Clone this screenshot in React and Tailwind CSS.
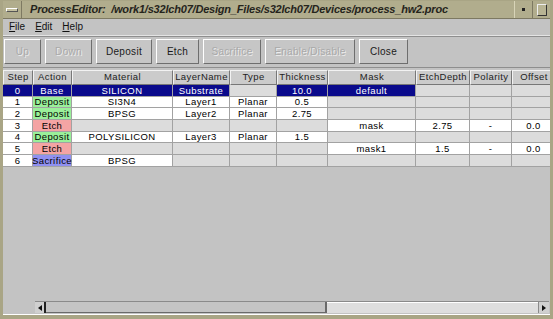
const font = { fontFamily: '"Liberation Sans", Arial, sans-serif' };

const cols = [
  { key: 'step', label: 'Step', w: 30 },
  { key: 'action', label: 'Action', w: 39 },
  { key: 'material', label: 'Material', w: 101 },
  { key: 'layer', label: 'LayerName', w: 57 },
  { key: 'type', label: 'Type', w: 47 },
  { key: 'thick', label: 'Thickness', w: 51 },
  { key: 'mask', label: 'Mask', w: 88 },
  { key: 'depth', label: 'EtchDepth', w: 54 },
  { key: 'pol', label: 'Polarity', w: 42 },
  { key: 'off', label: 'Offset', w: 44 },
];

// each cell: [text, background]
const W = 'bg-white';
const G = 'bg-[#dcdcdc]';
const N = 'bg-[#0a0a8c] text-white';
const GREEN = 'bg-[#9af09a]';
const PINK = 'bg-[#f4a4a4]';
const BLUE = 'bg-[#9090f0]';

const rows = [
  [['0', N], ['Base', N], ['SILICON', N], ['Substrate', N], ['', G], ['10.0', N], ['default', N], ['', G], ['', G], ['', G]],
  [['1', W], ['Deposit', GREEN], ['SI3N4', W], ['Layer1', W], ['Planar', W], ['0.5', W], ['', G], ['', G], ['', G], ['', G]],
  [['2', W], ['Deposit', GREEN], ['BPSG', W], ['Layer2', W], ['Planar', W], ['2.75', W], ['', G], ['', G], ['', G], ['', G]],
  [['3', W], ['Etch', PINK], ['', G], ['', G], ['', G], ['', G], ['mask', W], ['2.75', W], ['-', W], ['0.0', W]],
  [['4', W], ['Deposit', GREEN], ['POLYSILICON', W], ['Layer3', W], ['Planar', W], ['1.5', W], ['', G], ['', G], ['', G], ['', G]],
  [['5', W], ['Etch', PINK], ['', G], ['', G], ['', G], ['', G], ['mask1', W], ['1.5', W], ['-', W], ['0.0', W]],
  [['6', W], ['Sacrifice', BLUE], ['BPSG', W], ['', G], ['', G], ['', G], ['', G], ['', G], ['', G], ['', G]],
];

const buttons = [
  { label: 'Up', w: 37, off: true },
  { label: 'Down', w: 47, off: true },
  { label: 'Deposit', w: 56 },
  { label: 'Etch', w: 43 },
  { label: 'Sacrifice', w: 58, off: true },
  { label: 'Enable/Disable', w: 90, off: true },
  { label: 'Close', w: 49 },
];

function ToolButton({ label, w, off }) {
  return (
    <div
      className="flex h-[25px] items-center justify-center border border-t-white border-l-white border-r-[#6e6e6e] border-b-[#6e6e6e] bg-[#c6c6c6] text-[10px] tracking-[0.3px]"
      style={{ width: w }}
    >
      <span className={off ? 'text-[#a9a9a9] [text-shadow:1px_1px_0_#ececec]' : 'text-[#1a1a1a]'}>{label}</span>
    </div>
  );
}

export default function App() {
  return (
    <div className="flex h-[319px] w-[553px] flex-col overflow-hidden bg-[#a9a585] px-[3px] pb-[4px] pt-[1px]" style={font}>
      <div className="flex h-[18px] items-stretch border-b border-[#7d7962] bg-[#b1ad8d]">
        <div className="flex w-[19px] shrink-0 items-center justify-center border-r border-[#7d7962]">
          <div className="h-[4px] w-[12px] border border-t-white border-l-white border-r-[#555] border-b-[#555] bg-[#c4c0a0]" />
        </div>
        <div className="flex min-w-0 flex-1 items-center overflow-hidden whitespace-nowrap pl-[8px] text-[11px] font-bold italic tracking-[-0.2px] text-[#25241c]">
          ProcessEditor:&nbsp; /work1/s32lch07/Design_Files/s32lch07/Devices/process_hw2.proc
        </div>
        <div className="flex w-[18px] shrink-0 items-center justify-center border-l border-[#d8d4b8]">
          <div className="h-[3px] w-[3px] bg-[#222]" />
        </div>
        <div className="flex w-[18px] shrink-0 items-center justify-center border-l border-[#7d7962]">
          <div className="h-[12px] w-[10px] rounded-[1px] border border-[#333] border-t-[#eee] border-l-[#eee] bg-[#b8b494]" />
        </div>
      </div>

      <div className="flex flex-1 flex-col bg-[#c3c3c3]">
        <div className="flex h-[17px] items-end gap-[10px] border-b border-[#e4e4e4] pb-[1px] pl-[6px] text-[10px] text-[#111]">
          <span><span className="underline">F</span>ile</span>
          <span><span className="underline">E</span>dit</span>
          <span><span className="underline">H</span>elp</span>
        </div>

        <div className="flex gap-[4px] border-t border-[#8e8e8e] px-[1px] pb-[3px] pt-[2px]">
          {buttons.map((b) => (
            <ToolButton key={b.label} {...b} />
          ))}
        </div>

        <div className="flex flex-1 flex-col border-t border-[#8e8e8e] pt-[2px]">
          <div className="flex-1 overflow-hidden text-[9.5px] tracking-[0.4px]">
            <div className="flex h-[15px]">
              {cols.map((c) => (
                <div
                  key={c.key}
                  className="flex shrink-0 items-center justify-center border border-t-[#f2f2f2] border-l-[#f2f2f2] border-r-[#777] border-b-[#777] bg-[#cbcbcb] text-[#222]"
                  style={{ width: c.w }}
                >
                  {c.label}
                </div>
              ))}
            </div>
            {rows.map((r, i) => (
              <div key={i} className="flex h-[11.7px]">
                {r.map(([t, bg], j) => (
                  <div
                    key={j}
                    className={`flex shrink-0 items-center justify-center border-r border-b border-[#a2a2a2] leading-none ${bg}`}
                    style={{ width: cols[j].w }}
                  >
                    {t}
                  </div>
                ))}
              </div>
            ))}
          </div>

          <div className="ml-[32px] mr-[1px] mb-[1px] flex h-[12px] border-t border-[#8a8a8a] bg-[#dedede]">
            <div className="flex w-[11px] items-center justify-center border-r-2 border-[#222] bg-[#d0d0d0]">
              <div className="h-0 w-0 border-y-[3px] border-r-[4px] border-y-transparent border-r-[#111]" />
            </div>
            <div className="w-[281px] border-b border-r-2 border-[#6a6a6a] bg-[#c4c4c4]" />
            <div className="flex-1 border-t border-white" />
            <div className="flex w-[11px] items-center justify-center border-l border-[#8a8a8a] bg-[#d0d0d0]">
              <div className="h-0 w-0 border-y-[3px] border-l-[4px] border-y-transparent border-l-[#111]" />
            </div>
          </div>
          <div className="h-[1px] bg-white" />
        </div>
      </div>
    </div>
  );
}
